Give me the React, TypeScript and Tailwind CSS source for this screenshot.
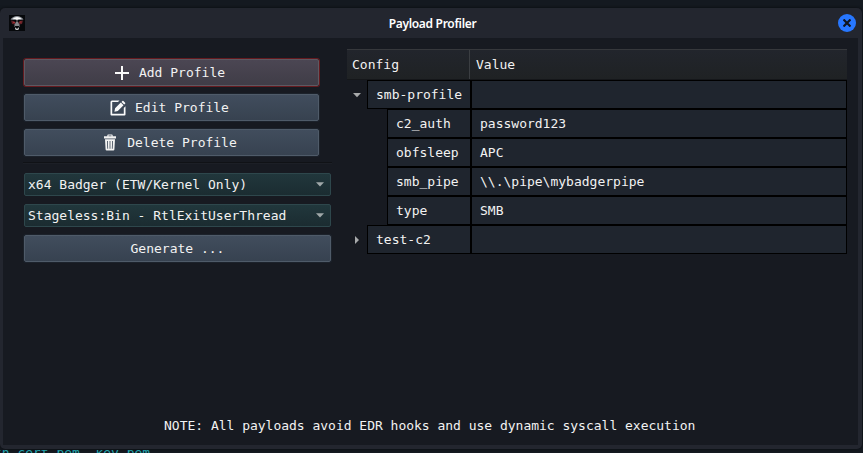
import React from "react";

const rows = [
  { depth: 0, name: "smb-profile", value: "", open: true },
  { depth: 1, name: "c2_auth", value: "password123" },
  { depth: 1, name: "obfsleep", value: "APC" },
  { depth: 1, name: "smb_pipe", value: "\\\\.\\pipe\\mybadgerpipe" },
  { depth: 1, name: "type", value: "SMB" },
  { depth: 0, name: "test-c2", value: "", open: false },
];

function SkullIcon() {
  return (
    <svg width="16" height="16" viewBox="0 0 16 16">
      <rect width="16" height="16" fill="#06080b" />
      <path d="M1.5 4.5Q4 1 8 1t6.500 3.500L11 5 8 4 5 5z" fill="#8e9299" />
      <path d="M3.500 3.600Q8 .4 12.500 3.600L10 4.300 8 5 6 4.300z" fill="#fafafa" />
      <path d="M2 5.500l3 .5 2 2-1 1.500-3-.5zM14 5.500l-3 .5-2 2 1 1.500 3-.5z" fill="#5c2026" />
      <path d="M4 7h2v1H4zM10.500 6.500h2v1h-2z" fill="#a52c31" />
      <path d="M5 9h1v3H5zM10 9h1v3h-1zM7 5h2v2H7z" fill="#48464a" />
      <path d="M7 7h2l1 2v2H6V9z" fill="#85868a" />
      <path d="M6 12l1 1.500h2l1-1.500v2L9 15H7l-1-1z" fill="#c4c5c7" />
    </svg>
  );
}

function PlusIcon() {
  return (
    <svg width="16" height="16" viewBox="0 0 16 16" fill="#fafafa">
      <path d="M7 1h2v6h6v2h-6v6h-2v-6h-6v-2h6z" />
    </svg>
  );
}

function EditIcon() {
  return (
    <svg width="16" height="16" viewBox="0 0 16 16" fill="#fafafa">
      <path d="M2 .5h7.500L8 2H2.200v11.800h11.600V8L15.500 6.300v8.200q0 1-1 1h-13q-1 0-1-1V2Q.5.5 2 .5z" />
      <path d="M4.400 11.700l.7-3.400 5.700-5.700 2.700 2.700-5.700 5.700zM11.500 1.900l.9-.9q.5-.5 1 0l1.700 1.700q.5.500 0 1l-.9.900z" />
    </svg>
  );
}

function TrashIcon() {
  return (
    <svg width="16" height="17" viewBox="-1 0 16 17" fill="#f2f2f2">
      <path d="M4.300 2.200V1.400Q4.300.5 5.200.5h3.600q.9 0 .9.900v.8h3.300v2.200H1V2.200zM5.500 1.500v.7h3v-.7z" fillRule="evenodd" />
      <path d="M2 5.300h10l-.6 10.200q-.1 1-1 1H3.600q-.9 0-1-1zM4 7l.35 7.700h.8L4.800 7zM6.600 7v7.700h.8V7zM9.200 7l-.35 7.700h.8L10 7z" fillRule="evenodd" />
    </svg>
  );
}

function ActionButton({ icon, children, active = false }: { icon?: React.ReactNode; children: React.ReactNode; active?: boolean }) {
  const tone = active
    ? "border-[#5d5962] from-[#4b4653] to-[#403d47] shadow-[0_0_0_1px_#651a1f]"
    : "border-[#4f5b69] from-[#414d5d] to-[#374250] shadow-[0_0_0_1px_#1c222b]";
  return (
    <button className={`flex h-[27px] w-full items-center justify-center gap-[9px] rounded-[2px] border bg-linear-to-b ${icon ? "pr-[4px]" : ""} ${tone}`}>
      {icon}
      <span>{children}</span>
    </button>
  );
}

function SelectBox({ children }: { children: React.ReactNode }) {
  return (
    <div className="flex h-[23px] w-[307px] items-center justify-between rounded-[2px] border border-[#2e474c] bg-linear-to-b from-[#21373c] to-[#1b2c31] pr-[6px] pl-[3px]">
      <span>{children}</span>
      <svg width="8" height="5" viewBox="0 0 8 5"><path d="M0 .3h8L4 4.500z" fill="#a0a8a9" /></svg>
    </div>
  );
}

export default function App() {
  return (
    <div className="relative h-[453px] w-[863px] overflow-hidden bg-[#141920] pt-2 font-['DejaVu_Sans_Mono',monospace] text-[13px] leading-[15px] whitespace-pre text-[#f2f2f2]">
      <div className="relative flex h-[441px] w-[862px] flex-col rounded-[5px] bg-[#23262f] pr-1 pb-1 pl-[3px] shadow-[0_0_3px_#080a0d]">
        <header className="flex h-[30px] items-center justify-between pr-[2px] pl-[6px]">
          <SkullIcon />
          <h1 className="pl-[2px] font-['Noto_Sans',sans-serif] text-[12px] font-semibold tracking-[-0.31px] text-white">Payload Profiler</h1>
          <button className="flex size-[18px] items-center justify-center rounded-full bg-[#2777ff]">
            <svg width="8" height="8" viewBox="0 0 8 8" stroke="#10151d" strokeWidth="2.2"><path d="M.5.5l7 7M7.500.5l-7 7" /></svg>
          </button>
        </header>
        <main className="flex min-h-0 flex-1 flex-col bg-[#171a21]">
          <div className="flex flex-1">
            <section className="ml-5 w-[309px] pt-[21px] pl-px">
              <div className="flex w-[295px] flex-col gap-2">
                <ActionButton icon={<PlusIcon />} active>Add Profile</ActionButton>
                <ActionButton icon={<EditIcon />}>Edit Profile</ActionButton>
                <ActionButton icon={<TrashIcon />}>Delete Profile</ActionButton>
              </div>
              <div className="mt-[6px] -ml-px h-[2px] border-t border-[#101216] bg-[#1c1f26]" />
              <div className="mt-[9px] flex w-[307px] flex-col gap-2">
                <SelectBox>x64 Badger (ETW/Kernel Only)</SelectBox>
                <SelectBox>Stageless:Bin - RtlExitUserThread</SelectBox>
                <ActionButton>Generate ...</ActionButton>
              </div>
            </section>
            <section className="ml-[15px] w-[500px] pt-[11px]">
              <div className="flex h-[31px] items-center border-t border-b border-t-[#36383c] border-b-[#15171a] bg-linear-to-b from-[#22252c] to-[#1f2224]">
                <div className="flex h-full w-[123px] items-center border-r border-[#3b3e42] pl-[5px]">Config</div>
                <div className="pl-[6px]">Value</div>
              </div>
              {rows.map((r) => (
                <div key={r.name} className="flex h-[29px]">
                  <div className={r.depth ? "w-10" : "flex w-5 items-center justify-center"}>
                    {!r.depth && (
                      <svg width="8" height="8" viewBox="0 0 8 8" fill="#a8aaab">
                        <path d={r.open ? "M0 2h8L4 6.300z" : "M2 0v8l4-4z"} />
                      </svg>
                    )}
                  </div>
                  <div className="flex flex-1 items-center border border-black bg-[#1f252e] pl-2">{r.name}</div>
                  <div className="flex w-[376px] items-center border border-black bg-[#1f252e] pl-2">{r.value}</div>
                </div>
              ))}
            </section>
          </div>
          <p className="mb-3 pl-[161px] tracking-[-0.013px]">NOTE: All payloads avoid EDR hooks and use dynamic syscall execution</p>
        </main>
      </div>
      <div className="absolute top-[450px] left-0 h-[3px] w-full overflow-hidden text-[#22a4ad]">
        <div className="-mt-[5px] -ml-[6px] tracking-[-0.02px]">th cert.pem, key.pem</div>
      </div>
    </div>
  );
}
